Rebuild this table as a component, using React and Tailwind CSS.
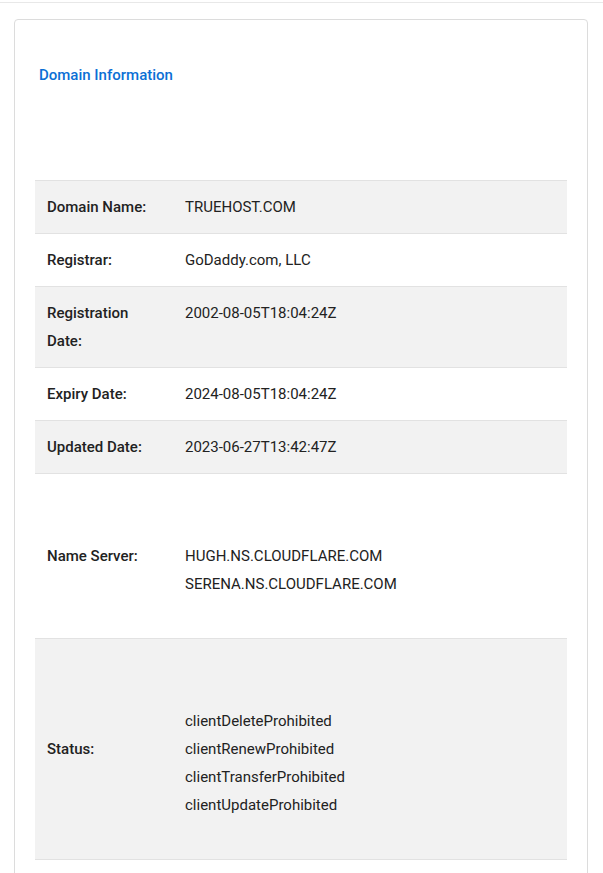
import React from 'react';

const rows = [
  { label: 'Domain Name:', value: ['TRUEHOST.COM'] },
  { label: 'Registrar:', value: ['GoDaddy.com, LLC'] },
  { label: 'Registration Date:', value: ['2002-08-05T18:04:24Z'] },
  { label: 'Expiry Date:', value: ['2024-08-05T18:04:24Z'] },
  { label: 'Updated Date:', value: ['2023-06-27T13:42:47Z'] },
  { label: 'Name Server:', value: ['HUGH.NS.CLOUDFLARE.COM', 'SERENA.NS.CLOUDFLARE.COM'], spaced: true },
  {
    label: 'Status:',
    value: ['clientDeleteProhibited', 'clientRenewProhibited', 'clientTransferProhibited', 'clientUpdateProhibited'],
    spaced: true,
  },
];

const App = () => {
  return (
    <div className="min-h-screen bg-white font-['Roboto',sans-serif] text-[15px] text-[#212529]">
      <div className="h-[3px] border-b border-[#e8e8e8]"></div>
      <div className="ml-[14px] mr-[15px] mt-[16px] rounded-[4px] border border-[#dcdcdc] px-[20px] pb-[60px]">
        <h2 className="ml-[4px] mt-[41px] text-[15px] font-medium leading-[28px] text-[#0b6fd5]">Domain Information</h2>
        <table className="mt-[91px] w-full table-fixed border-collapse">
          <tbody>
            {rows.map((row, i) => (
              <tr key={row.label} className={`border-b border-[#e2e2e2] ${i % 2 === 0 ? 'bg-[#f2f2f2]' : 'bg-white'} ${i === 0 ? 'border-t' : ''}`}>
                <td className="w-[138px] px-[12px] py-[12px] align-middle font-medium leading-[28px] text-[#222]">{row.label}</td>
                <td className="px-[12px] py-[12px] align-top leading-[28px] text-[#222]">
                  <div className={row.spaced ? 'pt-[56px] pb-[28px]' : ''}>
                    {row.value.map((v) => (
                      <div key={v}>{v}</div>
                    ))}
                  </div>
                </td>
              </tr>
            ))}
          </tbody>
        </table>
      </div>
    </div>
  );
};

export default App;
